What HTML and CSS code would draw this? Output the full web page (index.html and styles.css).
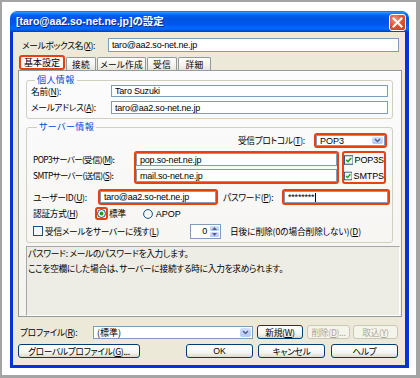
FILE: index.html
```html
<!DOCTYPE html>
<html lang="ja">
<head>
<meta charset="utf-8">
<title>設定</title>
<link rel="stylesheet" href="styles.css">
</head>
<body>
<div class="frame">
  <div class="window">
    <div class="titlebar">
      <span class="title">[taro@aa2.so-net.ne.jp]の設定</span>
      <span class="close"><svg width="11" height="11" viewBox="0 0 11 11"><path d="M1.5 1.5 L9.5 9.5 M9.5 1.5 L1.5 9.5" stroke="#fff" stroke-width="2" stroke-linecap="square"/></svg></span>
    </div>
    <div class="client">
      <div class="row mbox">
        <span class="lbl w-mbox">メールボックス名(<u>X</u>):</span>
        <span class="inp w-mboxin">taro@aa2.so-net.ne.jp</span>
      </div>
      <div class="tabs">
        <span class="tab sel">基本設定</span>
        <span class="tab t1">接続</span>
        <span class="tab t2">メール作成</span>
        <span class="tab t3">受信</span>
        <span class="tab t4">詳細</span>
      </div>
      <div class="panel">
        <fieldset class="group g1">
          <legend>個人情報</legend>
          <div class="row r-name">
            <span class="lbl w-g1">名前(<u>N</u>):</span>
            <span class="inp w-g1in h12">Taro Suzuki</span>
          </div>
          <div class="row r-addr">
            <span class="lbl w-g1">メールアドレス(<u>A</u>):</span>
            <span class="inp w-g1in">taro@aa2.so-net.ne.jp</span>
          </div>
        </fieldset>
        <fieldset class="group g2">
          <legend>サーバー情報</legend>
          <div class="row r-proto">
            <span class="lbl">受信プロトコル(<u>T</u>):</span>
            <span class="hl proto">
              <span class="combo">
                <span class="combo-text">POP3</span>
                <span class="arrow"><svg width="7" height="5" viewBox="0 0 7 5"><path d="M1 1 L3.5 3.5 L6 1" fill="none" stroke="#4D6185" stroke-width="1.5"/></svg></span>
              </span>
            </span>
          </div>
          <div class="row srv">
            <div class="srv-labels">
              <span class="lbl">POP3サーバー(受信)(<u>M</u>):</span>
              <span class="lbl">SMTPサーバー(送信)(<u>S</u>):</span>
            </div>
            <div class="hl srv-inputs">
              <span class="inp">pop.so-net.ne.jp</span>
              <span class="inp">mail.so-net.ne.jp</span>
            </div>
            <div class="hl srv-checks">
              <span class="chk"><svg width="10" height="10" viewBox="0 0 10 10"><rect x="0.5" y="0.5" width="9" height="9" fill="#F6F6F2" stroke="#1C5180"/><path d="M2.4 4.9 L4.2 6.7 L7.6 2.9" fill="none" stroke="#21A121" stroke-width="1.7"/></svg>POP3S</span>
              <span class="chk"><svg width="10" height="10" viewBox="0 0 10 10"><rect x="0.5" y="0.5" width="9" height="9" fill="#F6F6F2" stroke="#1C5180"/><path d="M2.4 4.9 L4.2 6.7 L7.6 2.9" fill="none" stroke="#21A121" stroke-width="1.7"/></svg>SMTPS</span>
            </div>
          </div>
          <div class="row r-user">
            <span class="lbl w-user">ユーザーID(<u>U</u>):</span>
            <span class="hl user"><span class="inp">taro@aa2.so-net.ne.jp</span></span>
            <span class="lbl w-pass">パスワード(<u>P</u>):</span>
            <span class="hl pass"><span class="inp">********<span class="caret"></span></span></span>
          </div>
          <div class="row r-auth">
            <span class="lbl w-auth">認証方式(<u>H</u>)</span>
            <span class="hl radio-hl"><svg width="9" height="9" viewBox="0 0 9 9"><circle cx="4.5" cy="4.5" r="4" fill="#F6F6F2" stroke="#1C5180"/><circle cx="4.5" cy="4.5" r="1.9" fill="#21A121"/></svg></span>
            <span class="std">標準</span>
            <span class="radio2"><svg width="10" height="10" viewBox="0 0 10 10"><circle cx="5" cy="5" r="4.4" fill="#F6F6F2" stroke="#1C5180"/></svg></span>
            <span class="apop">APOP</span>
          </div>
          <div class="row r-leave">
            <span class="chk2"><svg width="10" height="10" viewBox="0 0 10 10"><rect x="0.5" y="0.5" width="9" height="9" fill="#F6F6F2" stroke="#1C5180"/></svg></span>
            <span class="lbl w-leave">受信メールをサーバーに残す(<u>L</u>)</span>
            <span class="spin">
              <span class="spin-val">0</span>
              <span class="spin-btns">
                <span class="sb"><svg width="5" height="3" viewBox="0 0 5 3"><path d="M0 3 L2.5 0 L5 3Z" fill="#4D6185"/></svg></span>
                <span class="sb"><svg width="5" height="3" viewBox="0 0 5 3"><path d="M0 0 L2.5 3 L5 0Z" fill="#4D6185"/></svg></span>
              </span>
            </span>
            <span class="lbl days">日後に削除(0の場合削除しない)(<u>D</u>)</span>
          </div>
        </fieldset>
        <div class="desc">
          <p class="d1">パスワード: メールのパスワードを入力します。</p>
          <p class="d2">ここを空欄にした場合は、サーバーに接続する時に入力を求められます。</p>
        </div>
      </div>
      <div class="row profile">
        <span class="lbl w-prof">プロファイル(<u>R</u>):</span>
        <span class="combo pcombo">
          <span class="combo-text">(標準)</span>
          <span class="arrow"><svg width="7" height="5" viewBox="0 0 7 5"><path d="M1 1 L3.5 3.5 L6 1" fill="none" stroke="#4D6185" stroke-width="1.5"/></svg></span>
        </span>
        <span class="btn b-new">新規(<u>W</u>)</span>
        <span class="btn dis b-del">削除(<u>D</u>)...</span>
        <span class="btn dis b-imp">取込(<u>Y</u>)</span>
      </div>
      <div class="row buttons">
        <span class="btn b-global">グローバルプロファイル(<u>G</u>)...</span>
        <span class="btn b-ok">OK</span>
        <span class="btn b-cancel">キャンセル</span>
        <span class="btn b-help">ヘルプ</span>
      </div>
    </div>
  </div>
</div>
</body>
</html>
```

FILE: styles.css
```css
* { box-sizing: border-box; }
body {
  margin: 0;
  background: #fff;
  font-family: "Noto Sans CJK JP", "Liberation Sans", sans-serif;
  font-size: 8.7px;
  letter-spacing: -0.3px;
  color: #000;
  font-feature-settings: "palt";
}
u { text-decoration: underline; text-underline-offset: 1px; }
.frame {
  width: 420px;
  height: 378px;
  border-style: solid;
  border-color: #a4a4a4;
  border-width: 2px 4px 3px 2px;
  padding: 9px 0 0 8px;
  background: #fff;
}
.window {
  width: 399px;
  height: 357px;
  display: flex;
  flex-direction: column;
}
.titlebar {
  height: 21px;
  flex: none;
  border-radius: 7px 7px 0 0;
  background: linear-gradient(to bottom, #0058EE 0%, #3A93FF 5%, #288EFF 8%, #127DFF 12%, #036FFC 16%, #0262EE 22%, #0057E5 30%, #0054E3 40%, #0055EB 60%, #005BF5 70%, #026AFE 80%, #0062EF 88%, #0052D6 94%, #0040AB 100%);
  display: flex;
  align-items: flex-start;
}
.title {
  font-family: "Liberation Sans", "Noto Sans CJK JP", sans-serif;
  letter-spacing: 0;
  color: #fff;
  font-weight: bold;
  font-size: 10.5px;
  line-height: 21px;
  padding-left: 6px;
  text-shadow: 1px 1px 0 #0a2a8a;
  white-space: nowrap;
}
.close {
  margin: 3px 3px 0 auto;
  width: 17px;
  height: 17px;
  border: 1px solid #fff;
  border-radius: 3px;
  background: radial-gradient(circle at 35% 30%, #F0917A 0%, #E2543A 45%, #C8381C 100%);
  display: flex;
  align-items: center;
  justify-content: center;
}
.client {
  flex: 1;
  background: #ECE9D8;
  border-style: solid;
  border-color: #0831D9;
  border-width: 0 4px 3px 3px;
  display: flex;
  flex-direction: column;
}
.row { display: flex; align-items: center; }
.lbl { white-space: nowrap; }
.inp {
  height: 13px;
  border: 1px solid #7F9DB9;
  background: #fff;
  padding: 0 3px;
  font-family: "Liberation Sans", "Noto Sans CJK JP", sans-serif;
  font-size: 9px;
  letter-spacing: -0.2px;
  display: flex;
  align-items: center;
  white-space: nowrap;
  overflow: hidden;
}
.h12 { height: 12px; }
.hl {
  border: 2px solid #E9400F;
  border-radius: 3px;
  display: flex;
}

/* mailbox row */
.mbox { margin-top: 6px; height: 14px; padding-left: 9px; }
.w-mbox { width: 86px; }
.w-mboxin { width: 291px; height: 14px; }

/* tabs */
.tabs {
  display: flex;
  align-items: flex-end;
  margin: 3px 0 0 6px;
  height: 15px;
}
.tab {
  height: 13px;
  border: 1px solid #919B9C;
  border-bottom: none;
  border-radius: 2px 2px 0 0;
  background: linear-gradient(#FFFFFF, #F3F2EC 60%, #E6E4DA);
  display: flex;
  align-items: center;
  justify-content: center;
  white-space: nowrap;
  margin-left: 1px;
  letter-spacing: 0.2px;
}
.tab.sel {
  height: 15px;
  width: 46px;
  margin-left: 0;
  border: 2px solid #E9400F;
  border-radius: 3px;
  background: #FCFCFE;
  font-size: 9px;
  letter-spacing: 0;
}
.t1 { width: 30px; }
.t2 { width: 49px; }
.t3 { width: 30px; }
.t4 { width: 33px; }

/* panel */
.panel {
  margin-left: 5px;
  width: 384px;
  height: 247px;
  border: 1px solid #919B9C;
  background: linear-gradient(#FCFCFE, #F4F3EE);
  padding: 0 0 0 7px;
  display: flex;
  flex-direction: column;
}
.group {
  margin: 0;
  padding: 0;
  min-width: 0;
  width: 367px;
  border: 1px solid #D0D0BF;
  border-radius: 3px;
}
.group legend {
  margin-left: 4px;
  padding: 0 2px;
  color: #0046D5;
  line-height: 10px;
  height: 10px;
  font-size: 9px;
  letter-spacing: 0.4px;
}
.g1 { margin-top: 4px; padding: 0 0 4px 4px; }
.g2 { margin-top: 3px; padding: 0 0 3px 6px; }
.r-name { height: 12px; }
.r-addr { height: 13px; margin-top: 4px; }
.w-g1 { width: 80px; }
.w-g1in { width: 277px; }

.r-proto { margin-top: 1px; height: 15px; justify-content: flex-end; padding-right: 5px; }
.r-proto .lbl { margin-right: 9px; }
.proto { width: 73px; height: 15px; }
.combo {
  flex: 1;
  display: flex;
  align-items: stretch;
  background: #fff;
  border: 1px solid #7F9DB9;
}
.combo-text {
  flex: 1;
  padding-left: 3px;
  font-family: "Liberation Sans", "Noto Sans CJK JP", sans-serif;
  letter-spacing: 0;
  font-size: 9px;
  display: flex;
  align-items: center;
}
.arrow {
  width: 11px;
  margin: 1px;
  border-radius: 2px;
  background: linear-gradient(#D2DFFD, #B4C8F6);
  display: flex;
  align-items: center;
  justify-content: center;
}

.srv { margin-top: 3px; height: 33px; align-items: stretch; }
.srv-labels {
  width: 101px;
  display: flex;
  flex-direction: column;
  gap: 3px;
  padding-top: 2px;
  font-size: 8.4px;
  letter-spacing: -0.6px;
}
.srv-labels .lbl { height: 13px; line-height: 13px; }
.srv-inputs {
  width: 205px;
  flex-direction: column;
  gap: 3px;
}
.srv-inputs .inp { height: 13px; }
.srv-checks {
  margin-left: 3px;
  width: 44px;
  flex-direction: column;
  gap: 3px;
}
.chk {
  height: 13px;
  display: flex;
  align-items: center;
  gap: 1px;
  font-family: "Liberation Sans", "Noto Sans CJK JP", sans-serif;
  letter-spacing: -0.1px;
  font-size: 9px;
}

.r-user { margin-top: 5px; height: 16px; }
.w-user { width: 65px; }
.user { width: 120px; height: 16px; }
.user .inp, .pass .inp { flex: 1; height: 12px; }
.w-pass { margin-left: 5px; width: 59px; }
.pass { width: 108px; height: 16px; }
.caret { display: inline-block; width: 1px; height: 9px; background: #000; margin-left: 1px; }

.r-auth { margin-top: 2px; height: 13px; }
.w-auth { width: 62px; }
.radio-hl { width: 13px; height: 13px; align-items: center; justify-content: center; }
.std { margin-left: 1px; }
.radio2 { margin-left: 17px; display: flex; }
.apop { margin-left: 3px; font-family: "Liberation Sans", sans-serif; letter-spacing: 0; font-size: 9px; }

.r-leave { margin-top: 3px; height: 16px; }
.chk2 { display: flex; }
.w-leave { margin-left: 2px; width: 145px; }
.spin {
  width: 31px;
  height: 15px;
  border: 1px solid #7F9DB9;
  background: #fff;
  display: flex;
}
.spin-val { flex: 1; text-align: right; padding-right: 3px; font-family: "Liberation Sans", sans-serif; font-size: 9px; line-height: 13px; }
.spin-btns { width: 10px; display: flex; flex-direction: column; gap: 1px; padding: 1px 1px 1px 0; }
.sb {
  flex: 1;
  border-radius: 1px;
  background: linear-gradient(#D2DFFD, #B4C8F6);
  display: flex;
  align-items: center;
  justify-content: center;
}
.days { margin-left: 9px; letter-spacing: -0.1px; }

.desc {
  margin-top: 3px;
  width: 374px;
  flex: 1;
  border: 1px solid #A7A6AA;
  border-right-color: #fff;
  border-bottom-color: #fff;
  background: #EEEDE5;
  padding: 1px 0 0 1px;
}
.desc p { margin: 0; line-height: 11px; white-space: nowrap; }
.desc .d2 { margin-top: 4px; }

/* profile */
.profile { margin-top: 8px; height: 14px; padding-left: 7px; }
.w-prof { width: 73px; }
.pcombo { flex: none; width: 160px; height: 13px; }
.pcombo .combo-text { font-family: "Noto Sans CJK JP", sans-serif; }
.btn {
  height: 14px;
  border: 1px solid #003C74;
  border-radius: 3px;
  background: linear-gradient(#FFFFFF, #F4F4F0 65%, #DCD8CC);
  display: flex;
  align-items: center;
  justify-content: center;
  white-space: nowrap;
}
.btn.dis {
  border-color: #C9C7BA;
  color: #ACA899;
  background: #F5F4EA;
}
.b-new { margin-left: 4px; width: 46px; }
.b-del { margin-left: 4px; width: 43px; }
.b-imp { margin-left: 3px; width: 45px; }

.buttons { margin-top: 5px; height: 14px; padding-left: 5px; }
.b-global { width: 122px; }
.b-ok { margin-left: 46px; width: 67px; font-family: "Liberation Sans", sans-serif; letter-spacing: 0; }
.b-cancel { margin-left: 5px; width: 67px; }
.b-help { margin-left: 6px; width: 67px; }
```
